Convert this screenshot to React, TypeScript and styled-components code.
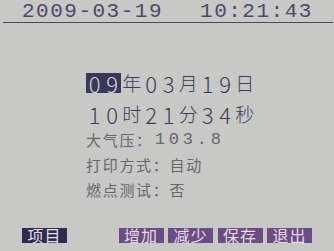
import React from "react";
import styled, { createGlobalStyle } from "styled-components";

const GlobalStyle = createGlobalStyle`
  html, body {
    margin: 0;
    padding: 0;
    background: #c8c8c6;
  }
`;

const Screen = styled.div`
  width: 334px;
  height: 251px;
  display: flex;
  flex-direction: column;
  background: #c8c8c6;
  font-family: "Noto Sans CJK SC", "Noto Sans", sans-serif;
  overflow: hidden;
`;

const Header = styled.div`
  display: flex;
  align-items: center;
  height: 22px;
  margin: 0 1px 0 3px;
  padding-left: 19px;
  border-bottom: 1px solid #4a4a52;
  font-family: "Liberation Mono", monospace;
  font-size: 21px;
  letter-spacing: 1.5px;
  color: #4c4a6c;
  gap: 37px;
`;

const Main = styled.div`
  display: flex;
  flex-direction: column;
  padding: 44px 0 0 86px;
`;

const BigLine = styled.div`
  display: flex;
  align-items: center;
  height: 31px;
  color: #3c3c5a;
  font-size: 19px;
`;

const Cell = styled.span<{ $wide?: boolean; $on?: boolean }>`
  display: inline-block;
  width: ${(p) => (p.$wide ? "21.5px" : "17.5px")};
  text-align: center;
  line-height: 20px;
  font-size: ${(p) => (p.$wide ? "19px" : "22px")};
  font-weight: 300;
  background: ${(p) => (p.$on ? "#3a3858" : "transparent")};
  color: ${(p) => (p.$on ? "#d4d4d8" : "inherit")};
`;

const InfoList = styled.div`
  display: flex;
  flex-direction: column;
  margin-top: -2px;
`;

const InfoLine = styled.div`
  display: flex;
  align-items: center;
  height: 25px;
  color: #66666c;
  font-size: 15px;
`;

const Label = styled.span`
  letter-spacing: 1.7px;
`;

const Value = styled.span<{ $mono?: boolean }>`
  margin-left: ${(p) => (p.$mono ? "2px" : "0")};
  font-family: ${(p) =>
    p.$mono ? `"Liberation Mono", monospace` : `"Noto Sans CJK SC", sans-serif`};
  font-size: ${(p) => (p.$mono ? "17px" : "15px")};
  letter-spacing: ${(p) => (p.$mono ? "3.8px" : "1.7px")};
`;

const Footer = styled.div`
  margin-top: auto;
  display: flex;
  justify-content: space-between;
  padding: 0 22px 8px 22px;
`;

const Group = styled.div`
  display: flex;
  gap: 4.5px;
`;

const Key = styled.div<{ $dark?: boolean }>`
  width: 45px;
  height: 15px;
  line-height: 15px;
  text-align: center;
  font-size: 16px;
  letter-spacing: 1px;
  color: #e2dee4;
  background: ${(p) => (p.$dark ? "#2e2c4c" : "#6c4c84")};
`;

function Glyphs({ text, hot = 0 }: { text: string; hot?: number }) {
  return (
    <>
      {text.split("").map((ch, i) => (
        <Cell key={i} $wide={!/[0-9]/.test(ch)} $on={i < hot}>
          {ch}
        </Cell>
      ))}
    </>
  );
}

export default function App() {
  return (
    <Screen>
      <GlobalStyle />
      <Header>
        <span>2009-03-19</span>
        <span>10:21:43</span>
      </Header>
      <Main>
        <BigLine>
          <Glyphs text="09年03月19日" hot={2} />
        </BigLine>
        <BigLine>
          <Glyphs text="10时21分34秒" />
        </BigLine>
        <InfoList>
          <InfoLine>
            <Label>大气压：</Label>
            <Value $mono>103.8</Value>
          </InfoLine>
          <InfoLine>
            <Label>打印方式：</Label>
            <Value>自动</Value>
          </InfoLine>
          <InfoLine>
            <Label>燃点测试：</Label>
            <Value>否</Value>
          </InfoLine>
        </InfoList>
      </Main>
      <Footer>
        <Key $dark>项目</Key>
        <Group>
          <Key>增加</Key>
          <Key>减少</Key>
          <Key>保存</Key>
          <Key>退出</Key>
        </Group>
      </Footer>
    </Screen>
  );
}
